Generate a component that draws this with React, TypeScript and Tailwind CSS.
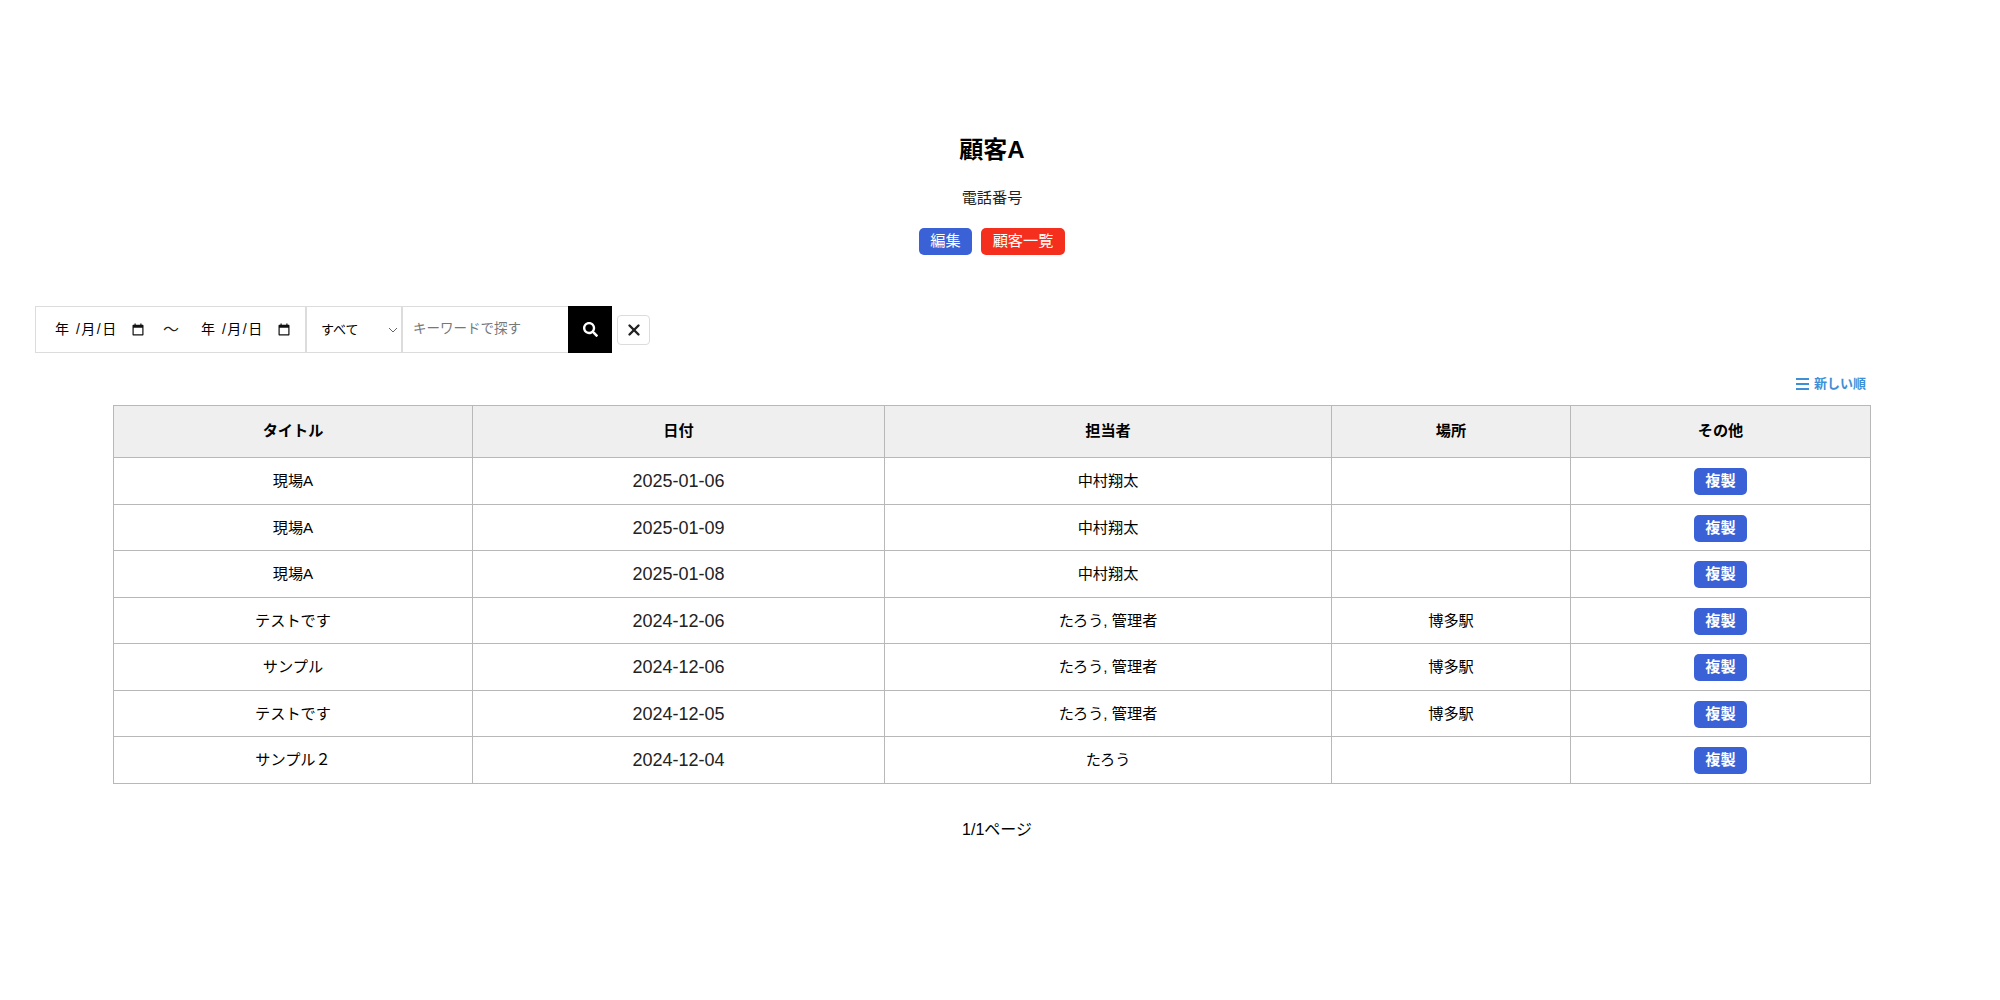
import React from "react";
import { X } from "lucide-react";
import { FaSearch } from "react-icons/fa";

const rows = [
  { title: "現場A", date: "2025-01-06", staff: "中村翔太", place: "" },
  { title: "現場A", date: "2025-01-09", staff: "中村翔太", place: "" },
  { title: "現場A", date: "2025-01-08", staff: "中村翔太", place: "" },
  { title: "テストです", date: "2024-12-06", staff: "たろう, 管理者", place: "博多駅" },
  { title: "サンプル", date: "2024-12-06", staff: "たろう, 管理者", place: "博多駅" },
  { title: "テストです", date: "2024-12-05", staff: "たろう, 管理者", place: "博多駅" },
  { title: "サンプル２", date: "2024-12-04", staff: "たろう", place: "" },
];

const CalendarIcon = () => (
  <svg width="12" height="13" viewBox="0 0 12 13" className="shrink-0">
    <path
      d="M2.500 0.500h1.200v1.200h4.600V0.500h1.200v1.200h1c.6 0 1 .4 1 1v8.800c0 .6-.4 1-1 1H1.500c-.6 0-1-.4-1-1V2.700c0-.6.4-1 1-1h1zM1.700 4.700v6.600h8.600V4.700z"
      fill="#111"
    />
  </svg>
);

const DateField = () => (
  <div className="flex w-[89px] items-center justify-between text-[14px] tracking-[1.5px] text-black">
    <span className="whitespace-pre">年 /月/日</span>
    <CalendarIcon />
  </div>
);

const App = () => {
  return (
    <div className="min-h-[1000px] bg-white pt-[134px] font-['Liberation_Sans','Noto_Sans_CJK_JP',sans-serif] text-[15.2px] text-black">
      <div className="pr-[16px]">
        <h1 className="text-center text-[24px] leading-[32px] font-bold">顧客A</h1>
        <p className="mt-[21px] text-center leading-[22px] text-[#222]">電話番号</p>
        <div className="mt-[19px] flex justify-center gap-[9px]">
          <span className="flex h-[27px] w-[53px] items-center justify-center rounded-[5px] bg-[#3a62d6] text-white">
            編集
          </span>
          <span className="flex h-[27px] w-[84px] items-center justify-center rounded-[5px] bg-[#f52f1d] text-white">
            顧客一覧
          </span>
        </div>
      </div>

      <div className="mt-[51px] ml-[35px] flex items-center">
        <div className="flex h-[47px] border border-[#dcdcdc]">
          <div className="flex w-[271px] items-center border-r-2 border-[#dcdcdc] pl-[19px]">
            <DateField />
            <span className="mr-[22px] ml-[19px] text-[16px] leading-none text-[#222]">〜</span>
            <DateField />
          </div>
          <div className="flex w-[96px] items-center justify-between border-r-2 border-[#dcdcdc] pr-[3px] pl-[14px] text-[13px]">
            <span>すべて</span>
            <svg width="10" height="6" viewBox="0 0 10 6" fill="none" stroke="#666" strokeWidth="1">
              <path d="M1 1l4 4 4-4" />
            </svg>
          </div>
          <div className="flex w-[165px] items-center pl-[10px] text-[13.500px] text-[#777]">キーワードで探す</div>
          <div className="-my-px -mr-px flex w-[44px] items-center justify-center bg-black">
            <FaSearch size={15} color="#fff" />
          </div>
        </div>
        <div className="ml-[5px] flex h-[30px] w-[33px] items-center justify-center rounded-[4px] border border-[#dcdcdc]">
          <X size={18} strokeWidth={3.200} color="#222" />
        </div>
      </div>

      <div className="mt-[22px] mr-[134px] flex items-center justify-end gap-[5px] text-[13px] leading-[18px] font-bold text-[#3f8fd6]">
        <svg width="13" height="12" viewBox="0 0 13 12" fill="#3f8fd6">
          <rect y="0" width="13" height="2" />
          <rect y="5" width="13" height="2" />
          <rect y="10" width="13" height="2" />
        </svg>
        新しい順
      </div>

      <div className="mt-[12px] px-[113px]">
        <table className="w-[1757px] table-fixed border-collapse">
          <colgroup>
            <col className="w-[359px]" />
            <col className="w-[412px]" />
            <col className="w-[447px]" />
            <col className="w-[239px]" />
            <col className="w-[300px]" />
          </colgroup>
          <thead>
            <tr className="h-[52px] bg-[#efefef]">
              {["タイトル", "日付", "担当者", "場所", "その他"].map((h) => (
                <th key={h} className="border border-[#b8b8b8] font-bold">
                  {h}
                </th>
              ))}
            </tr>
          </thead>
          <tbody>
            {rows.map((r, i) => (
              <tr key={i} className="h-[46.5px] text-center">
                <td className="border border-[#b8b8b8] pt-[2px]">{r.title}</td>
                <td className="border border-[#b8b8b8] pt-[2px] text-[18px] text-[#222]">{r.date}</td>
                <td className="border border-[#b8b8b8] pt-[2px]">{r.staff}</td>
                <td className="border border-[#b8b8b8] pt-[2px]">{r.place}</td>
                <td className="border border-[#b8b8b8] pt-[2px]">
                  <span className="inline-flex h-[27px] w-[53px] items-center justify-center rounded-[5px] bg-[#3a62d6] font-bold text-white">
                    複製
                  </span>
                </td>
              </tr>
            ))}
          </tbody>
        </table>
      </div>

      <p className="mt-[35px] mr-[6px] text-center text-[16px] leading-[22px]">1/1ページ</p>
    </div>
  );
};

export default App;
